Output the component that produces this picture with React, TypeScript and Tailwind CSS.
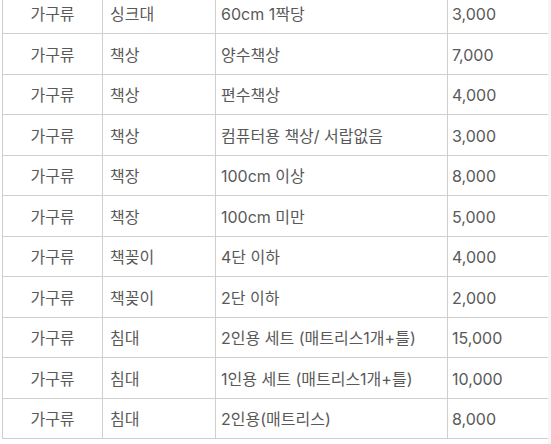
const rows: [string, string, string, string][] = [
  ["가구류", "싱크대", "60cm 1짝당", "3,000"],
  ["가구류", "책상", "양수책상", "7,000"],
  ["가구류", "책상", "편수책상", "4,000"],
  ["가구류", "책상", "컴퓨터용 책상/ 서랍없음", "3,000"],
  ["가구류", "책장", "100cm 이상", "8,000"],
  ["가구류", "책장", "100cm 미만", "5,000"],
  ["가구류", "책꽂이", "4단 이하", "4,000"],
  ["가구류", "책꽂이", "2단 이하", "2,000"],
  ["가구류", "침대", "2인용 세트 (매트리스1개+틀)", "15,000"],
  ["가구류", "침대", "1인용 세트 (매트리스1개+틀)", "10,000"],
  ["가구류", "침대", "2인용(매트리스)", "8,000"],
];

export default function App() {
  return (
    <div className="relative h-[444px] w-[551px] overflow-hidden bg-white font-['Inter','Noto_Sans_CJK_KR',sans-serif] text-[16px] text-[#595959]">
      <table className="ml-[2px] -mt-[7px] w-[546px] table-fixed border-collapse">
        <colgroup>
          <col className="w-[100px]" />
          <col className="w-[113px]" />
          <col className="w-[232px]" />
          <col className="w-[101px]" />
        </colgroup>
        <tbody>
          {rows.map((r, i) => (
            <tr key={i} className="h-[40.5px] border-b border-[#cfcfcf]">
              <td className="border-l border-r border-[#cfcfcf] pt-[2px] text-center">{r[0]}</td>
              <td className="border-r border-[#cfcfcf] pl-[7px] pt-[2px]">{r[1]}</td>
              <td className="border-r border-[#cfcfcf] pl-[5px] pt-[2px]">{r[2]}</td>
              <td className="pl-[4px] pt-[2px]">{r[3]}</td>
            </tr>
          ))}
        </tbody>
      </table>
      {/* faint scroll gutter on the right edge */}
      <div className="absolute right-0 top-0 h-full w-[3px] bg-[#f7f7f7]" />
    </div>
  );
}
